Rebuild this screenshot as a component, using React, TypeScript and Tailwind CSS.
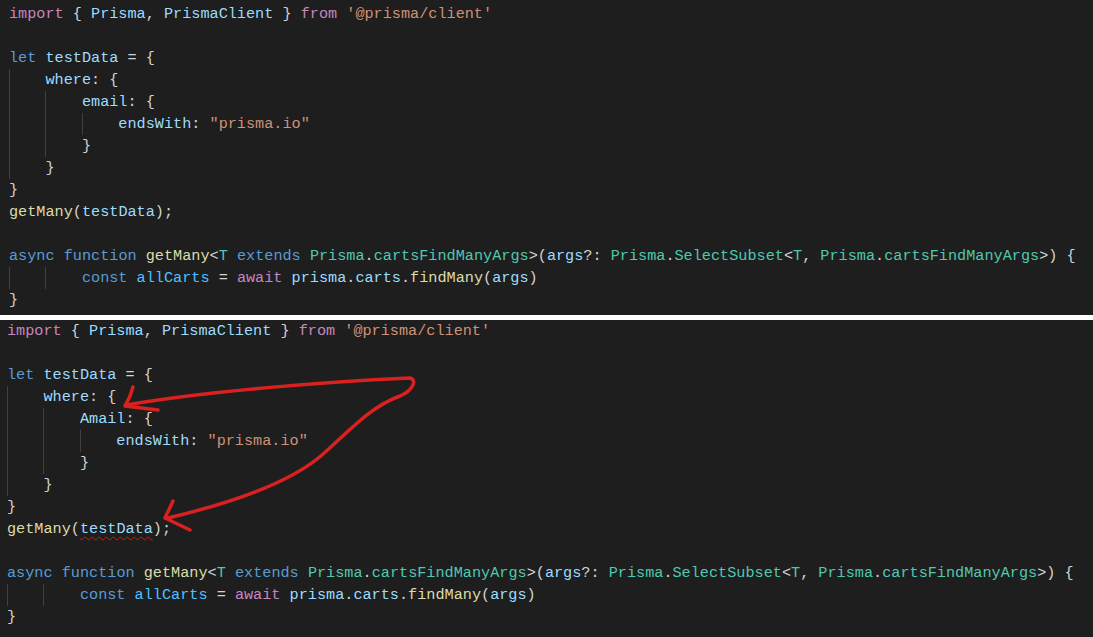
type Tok = [string, string?];

const C = {
  kw: "text-[#c586c0]",
  st: "text-[#569cd6]",
  v: "text-[#9cdcfe]",
  cv: "text-[#4fc1ff]",
  s: "text-[#ce9178]",
  fn: "text-[#dcdcaa]",
  ty: "text-[#4ec9b0]",
  p: "text-[#d4d4d4]",
};

type Line = { depth: number; toks: Tok[] };

function buildLines(variant: "a" | "b"): Line[] {
  const key = variant === "a" ? "email" : "Amail";
  return [
    { depth: 0, toks: [["import", C.kw], [" { "], ["Prisma", C.v], [", "], ["PrismaClient", C.v], [" } "], ["from", C.kw], [" "], ["'@prisma/client'", C.s]] },
    { depth: 0, toks: [] },
    { depth: 0, toks: [["let", C.st], [" "], ["testData", C.v], [" = {"]] },
    { depth: 1, toks: [["where", C.v], [": {"]] },
    { depth: 2, toks: [[key, C.v], [": {"]] },
    { depth: 3, toks: [["endsWith", C.v], [": "], ['"prisma.io"', C.s]] },
    { depth: 2, toks: [["}"]] },
    { depth: 1, toks: [["}"]] },
    { depth: 0, toks: [["}"]] },
    { depth: 0, toks: [["getMany", C.fn], ["("], ["testData", variant === "b" ? "squig" : C.v], [");"]] },
    { depth: 0, toks: [] },
    {
      depth: 0,
      toks: [
        ["async", C.st], [" "], ["function", C.st], [" "], ["getMany", C.fn], ["<"], ["T", C.ty], [" "], ["extends", C.st], [" "],
        ["Prisma", C.ty], ["."], ["cartsFindManyArgs", C.ty], [">("], ["args", C.v], ["?: "], ["Prisma", C.ty], ["."], ["SelectSubset", C.ty],
        ["<"], ["T", C.ty], [", "], ["Prisma", C.ty], ["."], ["cartsFindManyArgs", C.ty], [">) {"],
      ],
    },
    { depth: 2, toks: [["const", C.st], [" "], ["allCarts", C.cv], [" = "], ["await", C.kw], [" "], ["prisma", C.v], ["."], ["carts", C.v], ["."], ["findMany", C.fn], ["("], ["args", C.v], [")"]] },
    { depth: 0, toks: [["}"]] },
  ];
}

function CodeLine({ line }: { line: Line }) {
  return (
    <div className="h-[22px] leading-[22px] whitespace-pre flex">
      {Array.from({ length: line.depth }).map((_, i) => (
        <span key={i} className="inline-block w-[4ch] h-[22px] border-l border-[#404040] shrink-0" />
      ))}
      <span>
        {line.toks.map(([t, c], i) =>
          c === "squig" ? (
            <span key={i} className="text-[#9cdcfe] underline decoration-wavy decoration-[#e51400] underline-offset-[3px] decoration-1">
              {t}
            </span>
          ) : (
            <span key={i} className={c ?? C.p}>
              {t}
            </span>
          )
        )}
      </span>
    </div>
  );
}

function Editor({ variant, className }: { variant: "a" | "b"; className: string }) {
  const lines = buildLines(variant);
  return (
    <div className={`bg-[#1e1e1e] text-[#d4d4d4] font-['Liberation_Mono',monospace] text-[15.2px] ${className}`}>
      {lines.map((l, i) => (
        <CodeLine key={i} line={l} />
      ))}
    </div>
  );
}

export default function App() {
  return (
    <div className="relative w-[1093px] h-[637px] flex flex-col bg-white overflow-hidden">
      <Editor variant="a" className="h-[315px] pt-[3px] pl-[9px]" />
      <div className="h-[5px] bg-white" />
      <Editor variant="b" className="flex-1 pl-[7px]" />
      <svg className="absolute inset-0 pointer-events-none" width="1093" height="637" viewBox="0 0 1093 637" fill="none">
        <g stroke="#d9211f" strokeWidth="3.5" strokeLinecap="round" strokeLinejoin="round">
          <path d="M126 405 C 200 392, 320 382, 410 378 C 418 380, 412 391, 400 396 C 372 406, 352 428, 322 455 C 292 481, 240 501, 168 518" />
          <path d="M133 387 C 131 395, 128 401, 125 406 L 158 410" />
          <path d="M173 501 C 170 508, 167 513, 165 518 L 190 530" />
        </g>
      </svg>
    </div>
  );
}
